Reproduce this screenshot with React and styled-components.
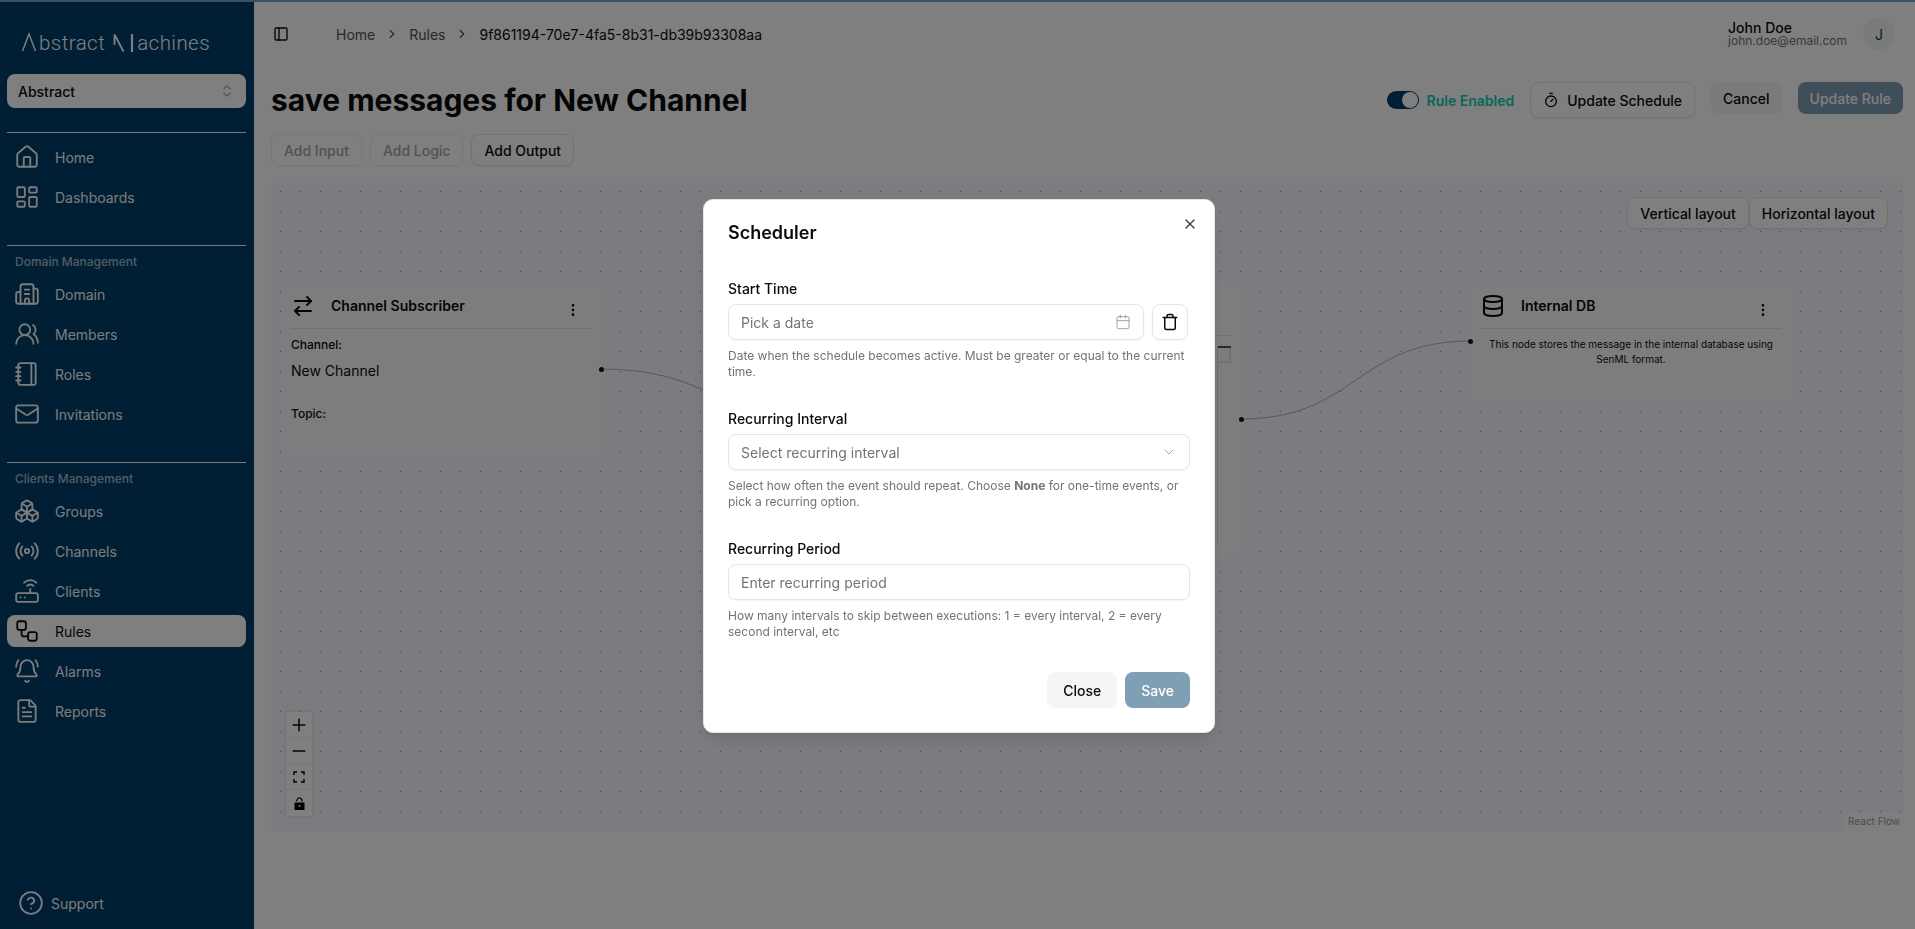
import React from "react";
import styled, { createGlobalStyle } from "styled-components";
import {
  House,
  LayoutDashboard,
  Building2,
  UsersRound,
  Notebook,
  Mail,
  Boxes,
  Radio,
  Router,
  Workflow,
  BellRing,
  FileText,
  CircleHelp,
  ChevronsUpDown,
  PanelLeft,
  ChevronRight,
  Timer,
  ArrowRightLeft,
  Database,
  EllipsisVertical,
  X,
  Calendar,
  Trash,
  ChevronDown,
  Plus,
  Minus,
} from "lucide-react";

const GlobalStyle = createGlobalStyle`
  html, body {
    margin: 0;
    height: 100%;
    overflow: hidden;
    background: #fff;
    font-family: Inter, "Liberation Sans", sans-serif;
    color: #0a0a0a;
  }
  * {
    box-sizing: border-box;
  }
`;

const Page = styled.div`
  width: 1915px;
  height: 929px;
  display: flex;
  flex-direction: column;
`;

const LoadBar = styled.div`
  height: 2px;
  flex: none;
  background: #7aa0d0;
`;

const Shell = styled.div`
  flex: 1;
  display: flex;
  min-height: 0;
`;

const Sidebar = styled.aside`
  width: 254px;
  flex: none;
  display: flex;
  flex-direction: column;
  padding: 0 8px 10px 7px;
  background: #003e6b;
  color: #f8f8f8;
`;

const Logo = styled.div`
  height: 72px;
  display: flex;
  align-items: flex-start;
  padding: 28px 0 0 15px;
  font-family: Roboto, sans-serif;
  font-weight: 300;
  font-size: 20.5px;
  line-height: 26px;
  letter-spacing: 0.45px;
  color: #fff;
  svg {
    flex: none;
    margin-top: 1px;
  }
`;

const LogoGap = styled.span`
  width: 8px;
`;

const OrgSelect = styled.div`
  height: 34px;
  flex: none;
  display: flex;
  align-items: center;
  justify-content: space-between;
  padding: 0 11px;
  border-radius: 8px;
  background: #fff;
  color: #0a0a0a;
  font-size: 14px;
  font-weight: 500;
  svg {
    color: #737373;
  }
`;

const Section = styled.div`
  display: flex;
  flex-direction: column;
  gap: 8px;
  margin-top: ${(p) => p.$top || 32}px;
  padding-top: 8px;
  border-top: 1px solid rgba(255, 255, 255, 0.95);
`;

const SectionLabel = styled.div`
  height: 16px;
  padding-left: 8px;
  font-size: 12px;
  line-height: 16px;
  font-weight: 500;
  color: rgba(255, 255, 255, 0.65);
`;

const NavRow = styled.div`
  height: 32px;
  display: flex;
  align-items: center;
  gap: 15px;
  padding-left: 7px;
  border-radius: 8px;
  font-size: 14px;
  background: ${(p) => (p.$active ? "#fff" : "transparent")};
  color: ${(p) => (p.$active ? "#0a0a0a" : "inherit")};
  svg {
    flex: none;
  }
`;

const SupportRow = styled(NavRow)`
  margin-top: auto;
  padding-left: 11px;
  gap: 7px;
`;

const Main = styled.main`
  flex: 1;
  min-width: 0;
  display: flex;
  flex-direction: column;
  padding: 0 12px 0 17px;
`;

const Header = styled.header`
  height: 64px;
  flex: none;
  display: flex;
  align-items: center;
  padding-left: 2px;
  margin-right: 8px;
`;

const Breadcrumbs = styled.nav`
  display: flex;
  align-items: center;
  margin-left: 47px;
  font-size: 14px;
  color: #525252;
  svg {
    margin: 0 10px;
  }
`;

const CurrentCrumb = styled.span`
  color: #0a0a0a;
`;

const UserBox = styled.div`
  margin-left: auto;
  display: flex;
  align-items: center;
  gap: 16px;
`;

const UserText = styled.div`
  display: flex;
  flex-direction: column;
`;

const UserName = styled.div`
  font-size: 14px;
  line-height: 14px;
  font-weight: 500;
`;

const UserEmail = styled.div`
  font-size: 12px;
  line-height: 12px;
  color: #737373;
`;

const Avatar = styled.div`
  width: 32px;
  height: 32px;
  border-radius: 50%;
  display: flex;
  align-items: center;
  justify-content: center;
  background: #f5f5f5;
  color: #003e6b;
  font-size: 14px;
`;

const TitleRow = styled.div`
  flex: none;
  display: flex;
  align-items: flex-start;
  justify-content: space-between;
  margin-top: 16px;
`;

const Title = styled.h1`
  margin: 0;
  font-size: 30px;
  line-height: 36px;
  font-weight: 700;
`;

const Actions = styled.div`
  display: flex;
  align-items: flex-start;
  gap: 16px;
`;

const EnabledSwitch = styled.div`
  height: 36px;
  display: flex;
  align-items: center;
  gap: 8px;
  font-size: 14px;
  font-weight: 600;
  color: #12cdb8;
`;

const Track = styled.div`
  width: 32px;
  height: 18px;
  display: flex;
  justify-content: flex-end;
  padding: 1px;
  border-radius: 9px;
  background: #003e6b;
`;

const Thumb = styled.div`
  width: 16px;
  height: 16px;
  border-radius: 50%;
  background: #fff;
`;

const Button = styled.button`
  height: ${(p) => p.$h || 32}px;
  display: inline-flex;
  align-items: center;
  justify-content: center;
  gap: 8px;
  padding: 0 ${(p) => p.$px || 12}px;
  border: none;
  border-radius: 8px;
  background: transparent;
  color: #0a0a0a;
  font-family: inherit;
  font-size: 14px;
  font-weight: 500;
  white-space: nowrap;
`;

const OutlineButton = styled(Button)`
  background: #fff;
  border: 1px solid ${(p) => (p.$disabled ? "#efefef" : "#e5e5e5")};
  box-shadow: 0 1px 2px rgba(0, 0, 0, 0.05);
  color: ${(p) => (p.$disabled ? "#a3a3a3" : "#0a0a0a")};
`;

const SoftButton = styled(Button)`
  background: #f5f5f5;
`;

const PrimaryButton = styled(Button)`
  background: #7f9fb5;
  color: #fff;
`;

const AddRow = styled.div`
  flex: none;
  display: flex;
  gap: 8px;
  margin-top: 16px;
`;

const Canvas = styled.section`
  position: relative;
  flex: none;
  height: 648px;
  margin-top: 17px;
  overflow: hidden;
  background-color: #f5f8ff;
  background-image: radial-gradient(circle at 0.5px 0.5px, #8e8e92 0.75px, transparent 0.75px);
  background-size: 20px 20px;
  background-position: 9px 8px;
`;

const LayoutPanel = styled.div`
  position: absolute;
  top: 14px;
  right: 15px;
  display: flex;
`;

const EdgeLayer = styled.svg`
  position: absolute;
  inset: 0;
  width: 100%;
  height: 100%;
`;

const Node = styled.div`
  position: absolute;
  left: ${(p) => p.$x}px;
  top: ${(p) => p.$y}px;
  width: ${(p) => p.$w}px;
  height: ${(p) => p.$h}px;
  padding: 0 10px;
  background: #fbfbfb;
`;

const Handle = styled.span`
  position: absolute;
  top: ${(p) => p.$y}px;
  ${(p) => p.$side}: -3px;
  width: 5px;
  height: 5px;
  border-radius: 50%;
  background: #111;
`;

const NodeHeader = styled.div`
  height: 46px;
  display: flex;
  align-items: flex-start;
  gap: 16px;
  padding-top: 11px;
  border-bottom: 1px solid #e2e2e2;
`;

const NodeTitle = styled.div`
  font-size: 14px;
  line-height: 24px;
  font-weight: 600;
`;

const NodeMenu = styled(EllipsisVertical)`
  margin: 8px 10px 0 auto;
`;

const FieldName = styled.div`
  margin-top: ${(p) => p.$top}px;
  font-size: 12px;
  line-height: 16px;
  font-weight: 500;
`;

const FieldValue = styled.div`
  margin-top: 8px;
  font-size: 14px;
  line-height: 20px;
`;

const NodeNote = styled.div`
  margin-top: 8px;
  padding: 0 5px;
  font-size: 10px;
  line-height: 15px;
  text-align: center;
`;

const LogicHeader = styled.div`
  height: 54px;
  border-bottom: 1px solid #e2e2e2;
`;

const LogicBody = styled.div`
  width: 14px;
  height: 199px;
  margin: 10px 0 0 auto;
  border-left: 1px solid #d8d8d8;
`;

const LogicBar = styled.div`
  height: 2px;
  background: #555;
`;

const LogicBox = styled.div`
  height: 15px;
  border-right: 2px solid #e4e4e4;
  border-bottom: 2px solid #e4e4e4;
`;

const Controls = styled.div`
  position: absolute;
  left: 15px;
  bottom: 15px;
  display: flex;
  flex-direction: column;
  box-shadow: 0 0 2px 1px rgba(0, 0, 0, 0.08);
`;

const ControlButton = styled.div`
  width: 26px;
  height: 26px;
  display: flex;
  align-items: center;
  justify-content: center;
  background: #fefefe;
  border-bottom: 1px solid #eee;
  &:last-child {
    border-bottom: none;
  }
`;

const Attribution = styled.div`
  position: absolute;
  right: 0;
  bottom: 0;
  padding: 2px 3px 3px 4px;
  background: rgba(255, 255, 255, 0.5);
  color: #999;
  font-size: 10px;
  line-height: 14px;
`;

const Overlay = styled.div`
  position: fixed;
  inset: 0;
  background: rgba(0, 0, 0, 0.5);
`;

const Modal = styled.div`
  position: fixed;
  left: 703px;
  top: 199px;
  width: 512px;
  padding: 24px;
  display: flex;
  flex-direction: column;
  background: #fff;
  border: 1px solid #e5e5e5;
  border-radius: 10px;
  box-shadow: 0 10px 15px -3px rgba(0, 0, 0, 0.1), 0 4px 6px -4px rgba(0, 0, 0, 0.1);
`;

const CloseIcon = styled(X)`
  position: absolute;
  top: 16px;
  right: 16px;
  color: #404040;
`;

const ModalTitle = styled.h2`
  margin: 0 0 8px;
  font-size: 18px;
  line-height: 18px;
  font-weight: 600;
`;

const Field = styled.div`
  display: flex;
  flex-direction: column;
  margin-top: 32px;
`;

const Label = styled.label`
  font-size: 14px;
  line-height: 14px;
  font-weight: 500;
  margin-bottom: 8px;
`;

const InputRow = styled.div`
  display: flex;
  gap: 8px;
`;

const Input = styled.div`
  width: ${(p) => p.$w || 462}px;
  height: 36px;
  display: flex;
  align-items: center;
  justify-content: space-between;
  padding: 0 12px;
  border: 1px solid #e5e5e5;
  border-radius: 8px;
  box-shadow: 0 1px 2px rgba(0, 0, 0, 0.05);
  color: #737373;
  font-size: 14px;
  svg {
    color: #a3a3a3;
  }
`;

const TrashButton = styled.div`
  width: 36px;
  height: 36px;
  display: flex;
  align-items: center;
  justify-content: center;
  border: 1px solid #e5e5e5;
  border-radius: 8px;
  box-shadow: 0 1px 2px rgba(0, 0, 0, 0.05);
`;

const Help = styled.p`
  margin: 8px 0 0;
  font-size: 12px;
  line-height: 16px;
  color: #737373;
  b {
    font-weight: 700;
  }
`;

const ModalFooter = styled.div`
  display: flex;
  justify-content: flex-end;
  gap: 8px;
  margin-top: 32px;
`;

const LambdaMark = () => (
  <svg width="17" height="26" viewBox="0 0 17 26" fill="none" stroke="currentColor" strokeWidth="1.5">
    <path d="M.5 20 L7 3 L13.5 20" />
  </svg>
);

const MachineMark = () => (
  <svg width="24" height="26" viewBox="0 0 24 26" fill="none" stroke="currentColor" strokeWidth="1.8">
    <path d="M1.5 14V3.5L10.5 20.5" />
    <path d="M19 3V21" strokeWidth="2.2" />
  </svg>
);

const FitIcon = () => (
  <svg width="12" height="12" viewBox="0 0 12 12" fill="none" stroke="#000" strokeWidth="1.4">
    <path d="M1 4V1H4M8 1H11V4M11 8V11H8M4 11H1V8" />
  </svg>
);

const LockIcon = () => (
  <svg width="11" height="14" viewBox="0 0 11 14">
    <path d="M3 6.5V4.5a2.5 2.5 0 0 1 5 0" fill="none" stroke="#000" strokeWidth="1.1" transform="rotate(25 5.5 4.5)" />
    <path fillRule="evenodd" d="M.5 6.5h10V14H.5zM5.5 9a1 1 0 1 0 0 2 1 1 0 0 0 0-2z" />
  </svg>
);

const mainNav = [
  { label: "Home", icon: House },
  { label: "Dashboards", icon: LayoutDashboard },
];

const domainNav = [
  { label: "Domain", icon: Building2 },
  { label: "Members", icon: UsersRound },
  { label: "Roles", icon: Notebook },
  { label: "Invitations", icon: Mail },
];

const clientNav = [
  { label: "Groups", icon: Boxes },
  { label: "Channels", icon: Radio },
  { label: "Clients", icon: Router },
  { label: "Rules", icon: Workflow, active: true },
  { label: "Alarms", icon: BellRing },
  { label: "Reports", icon: FileText },
];

const NavItems = ({ items }) =>
  items.map(({ label, icon: Icon, active }) => (
    <NavRow key={label} $active={active}>
      <Icon size={26} strokeWidth={1.7} />
      {label}
    </NavRow>
  ));

export default function App() {
  return (
    <>
      <GlobalStyle />
      <Page>
        <LoadBar />
        <Shell>
          <Sidebar>
            <Logo>
              <LambdaMark />
              <span>bstract</span>
              <LogoGap />
              <MachineMark />
              <span>achines</span>
            </Logo>
            <OrgSelect>
              Abstract
              <ChevronsUpDown size={16} strokeWidth={1.5} />
            </OrgSelect>
            <Section $top={24}>
              <NavItems items={mainNav} />
            </Section>
            <Section>
              <SectionLabel>Domain Management</SectionLabel>
              <NavItems items={domainNav} />
            </Section>
            <Section>
              <SectionLabel>Clients Management</SectionLabel>
              <NavItems items={clientNav} />
            </Section>
            <SupportRow>
              <CircleHelp size={26} strokeWidth={1.7} />
              Support
            </SupportRow>
          </Sidebar>
          <Main>
            <Header>
              <PanelLeft size={16} />
              <Breadcrumbs>
                Home
                <ChevronRight size={14} />
                Rules
                <ChevronRight size={14} />
                <CurrentCrumb>9f861194-70e7-4fa5-8b31-db39b93308aa</CurrentCrumb>
              </Breadcrumbs>
              <UserBox>
                <UserText>
                  <UserName>John Doe</UserName>
                  <UserEmail>john.doe@email.com</UserEmail>
                </UserText>
                <Avatar>J</Avatar>
              </UserBox>
            </Header>
            <TitleRow>
              <Title>save messages for New Channel</Title>
              <Actions>
                <EnabledSwitch>
                  <Track>
                    <Thumb />
                  </Track>
                  Rule Enabled
                </EnabledSwitch>
                <OutlineButton $h={36}>
                  <Timer size={16} />
                  Update Schedule
                </OutlineButton>
                <SoftButton>Cancel</SoftButton>
                <PrimaryButton>Update Rule</PrimaryButton>
              </Actions>
            </TitleRow>
            <AddRow>
              <OutlineButton $disabled>Add Input</OutlineButton>
              <OutlineButton $disabled>Add Logic</OutlineButton>
              <OutlineButton>Add Output</OutlineButton>
            </AddRow>
            <Canvas>
              <EdgeLayer>
                <path d="M330 186C490 186 490 300 650 300" fill="none" stroke="#b1b1b7" />
                <path d="M970 236C1085 236 1085 158 1200 158" fill="none" stroke="#b1b1b7" />
              </EdgeLayer>
              <Node $x={10} $y={100} $w={320} $h={172}>
                <NodeHeader>
                  <ArrowRightLeft size={24} />
                  <NodeTitle>Channel Subscriber</NodeTitle>
                  <NodeMenu size={16} />
                </NodeHeader>
                <FieldName $top={8}>Channel:</FieldName>
                <FieldValue>New Channel</FieldValue>
                <FieldName $top={25}>Topic:</FieldName>
                <Handle $side="right" $y={84} />
              </Node>
              <Node $x={679} $y={99} $w={291} $h={273}>
                <LogicHeader />
                <LogicBody>
                  <LogicBar />
                  <LogicBox />
                </LogicBody>
                <Handle $side="right" $y={135} />
              </Node>
              <Node $x={1200} $y={100} $w={320} $h={117}>
                <NodeHeader>
                  <Database size={24} />
                  <NodeTitle>Internal DB</NodeTitle>
                  <NodeMenu size={16} />
                </NodeHeader>
                <NodeNote>This node stores the message in the internal database using SenML format.</NodeNote>
                <Handle $side="left" $y={56} />
              </Node>
              <LayoutPanel>
                <OutlineButton>Vertical layout</OutlineButton>
                <OutlineButton>Horizontal layout</OutlineButton>
              </LayoutPanel>
              <Controls>
                <ControlButton>
                  <Plus size={20} strokeWidth={1.8} />
                </ControlButton>
                <ControlButton>
                  <Minus size={20} strokeWidth={1.8} />
                </ControlButton>
                <ControlButton>
                  <FitIcon />
                </ControlButton>
                <ControlButton>
                  <LockIcon />
                </ControlButton>
              </Controls>
              <Attribution>React Flow</Attribution>
            </Canvas>
          </Main>
        </Shell>
      </Page>
      <Overlay />
      <Modal>
        <CloseIcon size={16} />
        <ModalTitle>Scheduler</ModalTitle>
        <Field>
          <Label>Start Time</Label>
          <InputRow>
            <Input $w={416}>
              Pick a date
              <Calendar size={16} strokeWidth={1.5} />
            </Input>
            <TrashButton>
              <Trash size={18} />
            </TrashButton>
          </InputRow>
          <Help>Date when the schedule becomes active. Must be greater or equal to the current time.</Help>
        </Field>
        <Field>
          <Label>Recurring Interval</Label>
          <Input>
            Select recurring interval
            <ChevronDown size={16} strokeWidth={1.5} />
          </Input>
          <Help>
            Select how often the event should repeat. Choose <b>None</b> for one-time events, or pick a recurring
            option.
          </Help>
        </Field>
        <Field>
          <Label>Recurring Period</Label>
          <Input>Enter recurring period</Input>
          <Help>How many intervals to skip between executions: 1 = every interval, 2 = every second interval, etc</Help>
        </Field>
        <ModalFooter>
          <SoftButton $h={36} $px={16}>Close</SoftButton>
          <PrimaryButton $h={36} $px={16}>Save</PrimaryButton>
        </ModalFooter>
      </Modal>
    </>
  );
}
